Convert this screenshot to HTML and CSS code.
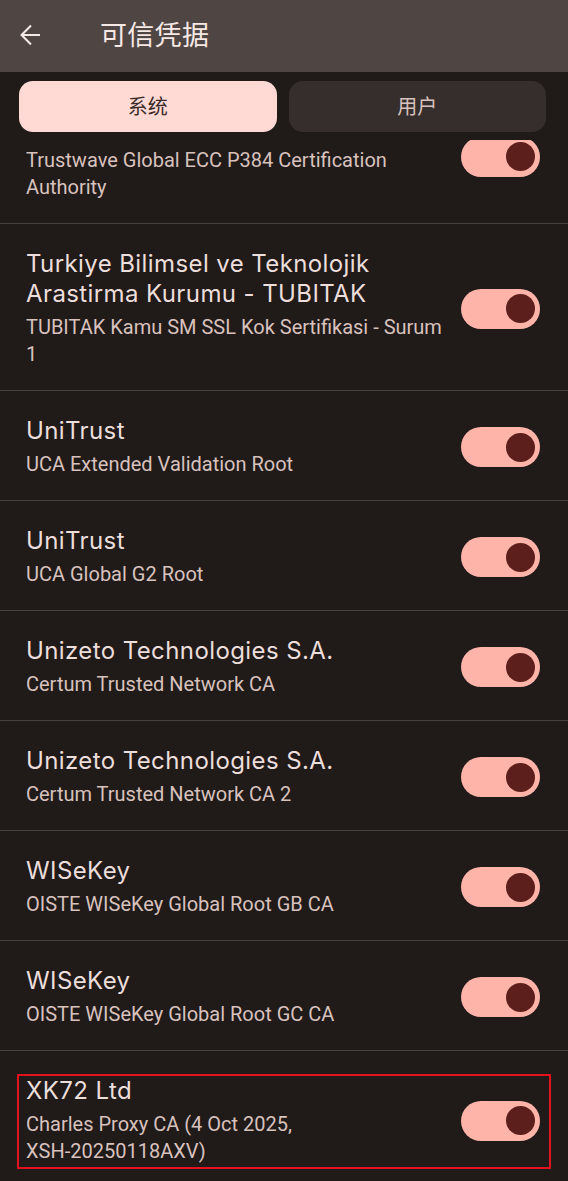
FILE: index.html
```html
<!DOCTYPE html>
<html lang="zh">
<head>
<meta charset="utf-8">
<link rel="stylesheet" href="styles.css">
</head>
<body>
<div class="screen">
  <header class="appbar">
    <svg class="back" viewBox="0 0 24 24" width="24" height="24"><path d="M21 12H2.8M12 2.6L2.6 12 12 21.4" fill="none" stroke="currentColor" stroke-width="2.1"/></svg>
    <h1 class="title">可信凭据</h1>
  </header>
  <div class="tabs">
    <div class="tab active">系统</div>
    <div class="tab">用户</div>
  </div>
  <div class="scroller">
    <ul class="list">
      <li class="row">
        <div class="text">
          <div class="name">Trustwave Holdings, Inc.</div>
          <div class="sub">Trustwave Global ECC P384 Certification Authority</div>
        </div>
        <span class="switch"><span class="thumb"></span></span>
      </li>
      <li class="row">
        <div class="text">
          <div class="name">Turkiye Bilimsel ve Teknolojik Arastirma Kurumu - TUBITAK</div>
          <div class="sub">TUBITAK Kamu SM SSL Kok Sertifikasi - Surum 1</div>
        </div>
        <span class="switch"><span class="thumb"></span></span>
      </li>
      <li class="row">
        <div class="text">
          <div class="name">UniTrust</div>
          <div class="sub">UCA Extended Validation Root</div>
        </div>
        <span class="switch"><span class="thumb"></span></span>
      </li>
      <li class="row">
        <div class="text">
          <div class="name">UniTrust</div>
          <div class="sub">UCA Global G2 Root</div>
        </div>
        <span class="switch"><span class="thumb"></span></span>
      </li>
      <li class="row">
        <div class="text">
          <div class="name">Unizeto Technologies S.A.</div>
          <div class="sub">Certum Trusted Network CA</div>
        </div>
        <span class="switch"><span class="thumb"></span></span>
      </li>
      <li class="row">
        <div class="text">
          <div class="name">Unizeto Technologies S.A.</div>
          <div class="sub">Certum Trusted Network CA 2</div>
        </div>
        <span class="switch"><span class="thumb"></span></span>
      </li>
      <li class="row">
        <div class="text">
          <div class="name">WISeKey</div>
          <div class="sub">OISTE WISeKey Global Root GB CA</div>
        </div>
        <span class="switch"><span class="thumb"></span></span>
      </li>
      <li class="row">
        <div class="text">
          <div class="name">WISeKey</div>
          <div class="sub">OISTE WISeKey Global Root GC CA</div>
        </div>
        <span class="switch"><span class="thumb"></span></span>
      </li>
      <li class="row marked">
        <div class="text">
          <div class="name">XK72 Ltd</div>
          <div class="sub">Charles Proxy CA (4 Oct 2025, <span class="nowrap">XSH-20250118AXV)</span></div>
        </div>
        <span class="switch"><span class="thumb"></span></span>
        <span class="highlight"></span>
      </li>
    </ul>
  </div>
</div>
</body>
</html>
```

FILE: styles.css
```css
* { box-sizing: border-box; }
html, body {
  margin: 0;
  padding: 0;
  background: #201a19;
}
body {
  font-family: Roboto, "Noto Sans", "Noto Sans CJK SC", sans-serif;
  width: 568px;
  height: 1181px;
  overflow: hidden;
}
.screen {
  display: flex;
  flex-direction: column;
  height: 1181px;
}
.appbar {
  height: 72px;
  flex: none;
  background: #4f4543;
  display: flex;
  align-items: center;
  padding: 0 0 6px 19px;
  color: #f6e8e5;
}
.back {
  width: 24px;
  height: 24px;
  color: #f6e8e5;
  margin-top: 4px;
}
.title {
  margin: 0 0 0 57px;
  font-family: "Noto Sans CJK SC", sans-serif;
  font-size: 27px;
  font-weight: 400;
  letter-spacing: 0.3px;
}
.tabs {
  flex: none;
  height: 68px;
  display: flex;
  gap: 12px;
  padding: 9px 22px 0 19px;
  background: #201a19;
  position: relative;
  z-index: 1;
}
.tab {
  flex: 1;
  height: 51px;
  border-radius: 14px;
  background: #362e2c;
  color: #d8c2be;
  display: flex;
  align-items: center;
  justify-content: center;
  font-family: "Noto Sans CJK SC", sans-serif;
  font-size: 20px;
  padding-bottom: 2px;
}
.tab.active {
  background: #ffdad5;
  color: #3b2b28;
}
.scroller {
  flex: 1;
  overflow: hidden;
}
.list {
  list-style: none;
  margin: -53px 0 0 0;
  padding: 0;
}
.row {
  position: relative;
  display: flex;
  align-items: center;
  padding: 25px 28px 22px 26px;
  border-bottom: 1px solid #4b4240;
}
.text {
  flex: 1;
  min-width: 0;
  margin-right: 14px;
}
.name {
  font-family: Inter, Roboto, sans-serif;
  font-size: 24px;
  letter-spacing: 0.4px;
  line-height: 30px;
  color: #ecdedb;
}
.sub {
  margin-top: 5px;
  font-size: 20px;
  line-height: 27px;
  color: #d8c2be;
}
.nowrap {
  white-space: nowrap;
}
.switch {
  flex: none;
  width: 79px;
  height: 40px;
  border-radius: 20px;
  background: #ffb4a9;
  display: flex;
  align-items: center;
  justify-content: flex-end;
  padding-right: 5px;
}
.thumb {
  width: 29px;
  height: 29px;
  border-radius: 50%;
  background: #5c1f1b;
}
.row.marked {
  border-bottom: none;
}
.highlight {
  position: absolute;
  left: 17px;
  right: 17px;
  top: 23px;
  height: 95px;
  border: 2px solid #e3121f;
  pointer-events: none;
}
```
